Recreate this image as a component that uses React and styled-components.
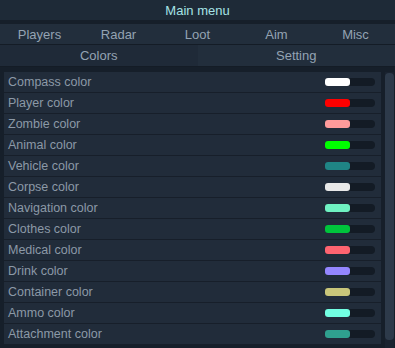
import React from "react";
import styled, { createGlobalStyle } from "styled-components";

const Global = createGlobalStyle`
  html, body { margin: 0; padding: 0; background: #151e29; }
  body { font-family: "Liberation Sans", Arial, sans-serif; }
`;

const Frame = styled.div`
  width: 395px;
  height: 348px;
  overflow: hidden;
  background: #161f2a;
  display: flex;
  flex-direction: column;
`;

const TitleBar = styled.div`
  height: 20px;
  background: #1e2a37;
  color: #a6e3e6;
  font-size: 13px;
  display: flex;
  align-items: center;
  justify-content: center;
`;

const TabGrid = styled.div`
  margin-top: 4px;
  display: grid;
  grid-template-columns: repeat(${(p) => p.$cols}, 1fr);
  height: ${(p) => p.$h}px;
  border-bottom: 1px solid #141c26;
`;

const Tab = styled.div`
  display: flex;
  align-items: center;
  justify-content: center;
  font-size: 13px;
  color: #94a3b3;
  background: ${(p) => (p.$active ? "#1f2a38" : "#222e3c")};
`;

const SubGrid = styled(TabGrid)`
  margin-top: 0;
`;

const Body = styled.div`
  margin-top: 5px;
  display: flex;
  flex: 1;
  min-height: 0;
`;

const List = styled.div`
  margin-left: 4px;
  width: 377px;
  display: flex;
  flex-direction: column;
`;

const Row = styled.div`
  height: 20px;
  flex: none;
  border-bottom: 1px solid #171f2a;
  background: #212c3a;
  display: flex;
  align-items: center;
  padding-left: 4px;
  padding-right: 6px;
`;

const Label = styled.div`
  flex: 1;
  font-size: 12.5px;
  color: #8c99a7;
`;

const Track = styled.div`
  width: 50px;
  height: 8px;
  border-radius: 4px;
  background: #131b25;
  display: flex;
`;

const Swatch = styled.div`
  width: 25px;
  height: 8px;
  border-radius: 3px;
  background: ${(p) => p.$c};
`;

const Scroll = styled.div`
  margin-left: 4px;
  width: 9px;
  background: #1a2330;
  display: flex;
  padding-top: 1px;
  padding-bottom: 8px;
`;

const Thumb = styled.div`
  flex: 1;
  border-radius: 4px;
  background: #2d3a4a;
`;

const items = [
  ["Compass color", "#ffffff"],
  ["Player color", "#ff0000"],
  ["Zombie color", "#ff9b9b"],
  ["Animal color", "#00ff00"],
  ["Vehicle color", "#1f8585"],
  ["Corpse color", "#e8e8e8"],
  ["Navigation color", "#6ff2c2"],
  ["Clothes color", "#00c43c"],
  ["Medical color", "#ff6470"],
  ["Drink color", "#9486ff"],
  ["Container color", "#c9c67a"],
  ["Ammo color", "#72ffe2"],
  ["Attachment color", "#2fa08e"],
];

export default function App() {
  return (
    <Frame>
      <Global />
      <TitleBar>Main menu</TitleBar>
      <TabGrid $cols={5} $h={20}>
        {["Players", "Radar", "Loot", "Aim", "Misc"].map((t) => (
          <Tab key={t}>{t}</Tab>
        ))}
      </TabGrid>
      <SubGrid $cols={2} $h={21}>
        <Tab $active>Colors</Tab>
        <Tab>Setting</Tab>
      </SubGrid>
      <Body>
        <List>
          {items.map(([n, c]) => (
            <Row key={n}>
              <Label>{n}</Label>
              <Track>
                <Swatch $c={c} />
              </Track>
            </Row>
          ))}
        </List>
        <Scroll>
          <Thumb />
        </Scroll>
      </Body>
    </Frame>
  );
}
